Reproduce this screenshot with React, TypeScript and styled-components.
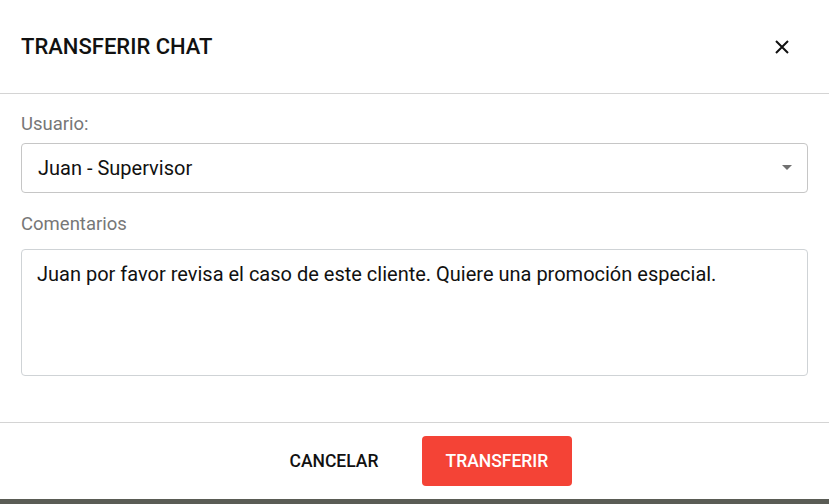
import styled, { createGlobalStyle } from "styled-components";

const GlobalStyle = createGlobalStyle`
  html, body {
    margin: 0;
    padding: 0;
    background: #ffffff;
    font-family: Roboto, "Liberation Sans", sans-serif;
  }
  * {
    box-sizing: border-box;
  }
`;

const Page = styled.div`
  width: 829px;
  height: 504px;
  display: flex;
  flex-direction: column;
  overflow: hidden;
`;

const Dialog = styled.div`
  height: 499px;
  display: flex;
  flex-direction: column;
  background: #ffffff;
`;

const Header = styled.div`
  height: 94px;
  display: flex;
  align-items: center;
  justify-content: space-between;
  padding: 0 35px 0 21px;
  border-bottom: 1px solid #d4d4d4;
`;

const Title = styled.h2`
  margin: 0;
  font-size: 22px;
  font-weight: 500;
  color: #111111;
`;

const CloseButton = styled.button`
  width: 24px;
  height: 24px;
  padding: 0;
  border: none;
  background: none;
  display: flex;
  align-items: center;
  justify-content: center;
  cursor: pointer;
`;

const Body = styled.div`
  flex: 1;
  display: flex;
  flex-direction: column;
  padding: 19px 21px 0;
`;

const Label = styled.label<{ $gap: number; $top?: number }>`
  display: block;
  font-size: 18.5px;
  line-height: 22px;
  color: #777777;
  margin-top: ${(p) => p.$top ?? 0}px;
  margin-bottom: ${(p) => p.$gap}px;
`;

const SelectBox = styled.div`
  height: 50px;
  border: 1px solid #c6c6c6;
  border-radius: 4px;
  display: flex;
  align-items: center;
  justify-content: space-between;
  padding: 0 15px 0 16px;
  font-size: 20px;
  color: #111111;
`;

const Caret = styled.span`
  width: 0;
  height: 0;
  border-left: 5px solid transparent;
  border-right: 5px solid transparent;
  border-top: 5px solid #707070;
  margin-top: -2px;
`;

const TextArea = styled.div`
  height: 127px;
  border: 1px solid #cfd3d6;
  border-radius: 4px;
  padding: 12px 15px;
  font-size: 20px;
  line-height: 24px;
  color: #111111;
`;

const Footer = styled.div`
  height: 77px;
  border-top: 1px solid #d4d4d4;
  display: flex;
  align-items: center;
  justify-content: center;
  gap: 19px;
  padding-left: 8px;
`;

const Button = styled.button<{ $primary?: boolean }>`
  height: 50px;
  padding: 0 24px;
  border: none;
  border-radius: 4px;
  font-family: Roboto, "Liberation Sans", sans-serif;
  font-size: 17.5px;
  font-weight: 500;
  background: ${(p) => (p.$primary ? "#f44336" : "transparent")};
  color: ${(p) => (p.$primary ? "#ffffff" : "#111111")};
  width: ${(p) => (p.$primary ? "150px" : "auto")};
  cursor: pointer;
`;

const Backdrop = styled.div`
  flex: 1;
  background: #5a5c55;
  overflow: hidden;
  padding-left: 262px;
`;

const BackdropText = styled.div`
  font-size: 16px;
  line-height: 20px;
  margin-top: 3px;
  color: #101010;
  white-space: nowrap;
`;

export default function App() {
  return (
    <Page>
      <GlobalStyle />
      <Dialog>
        <Header>
          <Title>TRANSFERIR CHAT</Title>
          <CloseButton aria-label="Cerrar">
            <svg width="14" height="14" viewBox="0 0 14 14">
              <path d="M1 1 L13 13 M13 1 L1 13" stroke="#111" strokeWidth="2" />
            </svg>
          </CloseButton>
        </Header>
        <Body>
          <Label $gap={8}>Usuario:</Label>
          <SelectBox>
            <span>Juan - Supervisor</span>
            <Caret />
          </SelectBox>
          <Label $top={20} $gap={14}>Comentarios</Label>
          <TextArea>
            Juan por favor revisa el caso de este cliente. Quiere una promoción especial.
          </TextArea>
        </Body>
        <Footer>
          <Button>CANCELAR</Button>
          <Button $primary>TRANSFERIR</Button>
        </Footer>
      </Dialog>
      <Backdrop>
        <BackdropText>Fabiana - Supervisor 1 ha transferido la conversación a Fabiana - Supervisor</BackdropText>
      </Backdrop>
    </Page>
  );
}
